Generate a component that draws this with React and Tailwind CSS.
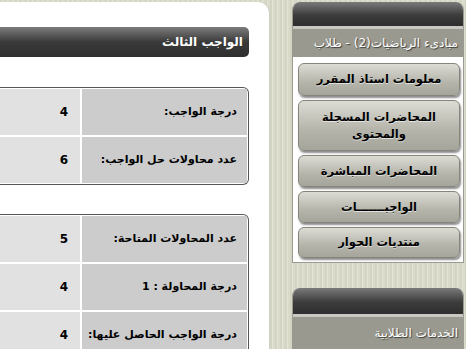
import React from "react";

const font = { fontFamily: '"DejaVu Sans", "Liberation Sans", sans-serif' };

function Row({ label, value }) {
  return (
    <div className="flex h-[46px] shrink-0 gap-[2px]">
      <div className="w-[165px] shrink-0 bg-[#cccccc] flex items-center pr-[10px] text-[11px] font-bold text-black whitespace-nowrap">
        {label}
      </div>
      <div className="flex-1 bg-[#e1e1e1] flex items-center pr-[12px] text-[12px] font-bold text-black">
        {value}
      </div>
    </div>
  );
}

function Table({ rows, className = "" }) {
  return (
    <div className={"shrink-0 border border-l-0 border-[#555555] rounded-r-[6px] bg-white p-[1px] pl-0 flex flex-col gap-[2px] " + className}>
      {rows.map((r, i) => (
        <Row key={i} label={r[0]} value={r[1]} />
      ))}
    </div>
  );
}

function Btn({ h, children }) {
  return (
    <div
      className={
        "shrink-0 flex items-center justify-center text-center rounded-[6px] border border-[#85857c] bg-[linear-gradient(#dcdcd4,#b4b4ab_60%,#a5a59c)] shadow-[1px_2px_2px_rgba(0,0,0,0.45)] text-[11.5px] font-bold text-black leading-[17px] whitespace-nowrap [text-shadow:0_1px_0_rgba(255,255,255,0.6)] " +
        h
      }
    >
      {children}
    </div>
  );
}

export default function App() {
  return (
    <div
      dir="rtl"
      style={font}
      className="w-[466px] h-[349px] overflow-hidden flex gap-[22px] pr-[2px] bg-[repeating-linear-gradient(90deg,#d3d4c2_0px,#d3d4c2_2px,#e3e4d5_2px,#e3e4d5_3px,#d9dac9_3px,#d9dac9_5px)]"
    >
      {/* Sidebar */}
      <div className="w-[172px] shrink-0 flex flex-col pt-[2px] gap-[25px]">
        <div className="shrink-0 flex flex-col border border-[#9a9a92] border-t-0 rounded-t-[8px] overflow-hidden bg-white">
          <div className="shrink-0 h-[24px] bg-[linear-gradient(#7a7a7a,#3c3c3c_55%,#2e2e2e)]" />
          <div className="shrink-0 h-[3px] bg-[#c9c9c1]" />
          <div className="shrink-0 h-[28px] bg-[#999990] flex items-center pr-[5px] text-[12px] text-white whitespace-nowrap [text-shadow:1px_1px_1px_rgba(0,0,0,0.6)]">
            مبادىء الرياضيات(2) - طلاب
          </div>
          <div className="shrink-0 flex flex-col gap-[4px] pt-[6px] pb-[4px] pr-[3px] pl-[5px]">
            <Btn h="h-[33px]">معلومات استاذ المقرر</Btn>
            <Btn h="h-[51px]">
              المحاضرات المسجلة
              <br />
              والمحتوى
            </Btn>
            <Btn h="h-[32px]">المحاضرات المباشرة</Btn>
            <Btn h="h-[32px]">الواجبـــــــات</Btn>
            <Btn h="h-[31px]">منتديات الحوار</Btn>
          </div>
        </div>
        <div className="shrink-0 flex flex-col border border-[#9a9a92] border-t-0 rounded-t-[8px] overflow-hidden bg-white">
          <div className="shrink-0 h-[26px] bg-[linear-gradient(#7a7a7a,#3c3c3c_55%,#2e2e2e)]" />
          <div className="shrink-0 h-[3px] bg-[#c9c9c1]" />
          <div className="shrink-0 h-[32px] bg-[#999990] flex items-center pr-[5px] text-[12px] text-white whitespace-nowrap [text-shadow:1px_1px_1px_rgba(0,0,0,0.6)]">
            الخدمات الطلابية
          </div>
          <div className="shrink-0 h-[40px]" />
        </div>
      </div>

      {/* Main panel */}
      <div className="w-[270px] shrink-0 mt-[2px] bg-white rounded-tr-[12px] border-r border-[#cfcfc4] pr-[20px] pt-[25px] flex flex-col">
        <div className="shrink-0 h-[30px] rounded-r-[5px] bg-[linear-gradient(#7c7c7c,#3a3a3a_50%,#2f2f2f)] flex items-center pr-[6px] text-[12px] font-bold text-white">
          الواجب الثالث
        </div>
        <Table
          className="mt-[30px]"
          rows={[
            ["درجة الواجب:", "4"],
            ["عدد محاولات حل الواجب:", "6"],
          ]}
        />
        <Table
          className="mt-[29px]"
          rows={[
            ["عدد المحاولات المتاحة:", "5"],
            ["درجة المحاولة : 1", "4"],
            ["درجة الواجب الحاصل عليها:", "4"],
          ]}
        />
      </div>
    </div>
  );
}
